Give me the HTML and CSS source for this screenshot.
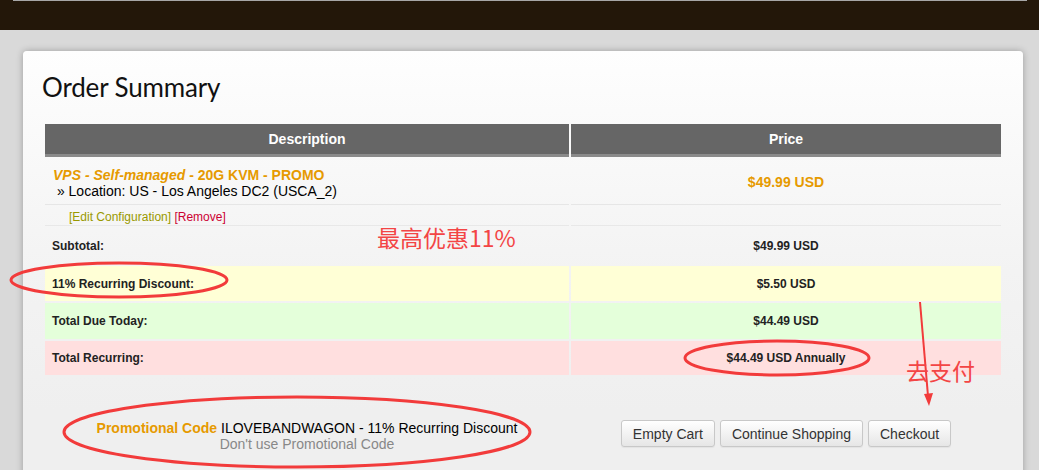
FILE: index.html
```html
<!DOCTYPE html>
<html lang="en">
<head>
  <meta charset="UTF-8">
  <title>Order Summary</title>
  <link rel="stylesheet" href="styles.css">
</head>
<body>
  <div class="topbar">
    <div class="topbar-edge"></div>
  </div>

  <div class="card">
    <h1>Order Summary</h1>

    <table class="cart">
      <tr>
        <th>Description</th>
        <th>Price</th>
      </tr>
      <tr class="item">
        <td class="desc">
          <div class="name"><em>VPS - Self-managed</em> - 20G KVM - PROMO</div>
          <div>&nbsp;» Location: US - Los Angeles DC2 (USCA_2)</div>
        </td>
        <td class="price orange">$49.99 USD</td>
      </tr>
      <tr class="links">
        <td><a class="edit" href="#">[Edit Configuration]</a> <a class="remove" href="#">[Remove]</a></td>
        <td></td>
      </tr>
      <tr class="total">
        <td>Subtotal:</td>
        <td class="price">$49.99 USD</td>
      </tr>
      <tr class="total discount">
        <td>11% Recurring Discount:</td>
        <td class="price">$5.50 USD</td>
      </tr>
      <tr class="total today">
        <td>Total Due Today:</td>
        <td class="price">$44.49 USD</td>
      </tr>
      <tr class="total recurring">
        <td>Total Recurring:</td>
        <td class="price">$44.49 USD Annually</td>
      </tr>
    </table>

    <div class="cart-foot">
      <div class="promo">
        <div><strong class="orange">Promotional Code</strong> ILOVEBANDWAGON - 11% Recurring Discount</div>
        <a class="promo-remove" href="#">Don't use Promotional Code</a>
      </div>
      <div class="actions">
        <button class="btn">Empty Cart</button>
        <button class="btn">Continue Shopping</button>
        <button class="btn">Checkout</button>
      </div>
    </div>
  </div>

  <!-- red marker notes -->
  <div class="notes">
    <svg class="marks" width="1039" height="470" viewBox="0 0 1039 470">
      <ellipse cx="119" cy="280" rx="108" ry="17"/>
      <ellipse cx="777" cy="358" rx="92" ry="17"/>
      <ellipse cx="297" cy="432" rx="233" ry="35"/>
      <line x1="920" y1="302" x2="928" y2="396"/>
      <polygon class="head" points="924,394 933,393 929,406"/>
    </svg>
    <span class="note note-discount">最高优惠11%</span>
    <span class="note note-pay">去支付</span>
  </div>
</body>
</html>
```

FILE: styles.css
```css
* {
  margin: 0;
  padding: 0;
  box-sizing: border-box;
}
body {
  font-family: "Liberation Sans", Arial, sans-serif;
  font-size: 14px;
  color: #000;
  background: #d9d9d9;
  height: 470px;
  overflow: hidden;
}
.topbar {
  height: 30px;
  background: #231709;
}
.topbar-edge {
  margin: 0 12px 0 13px;
  height: 1px;
  background: #a7a7a7;
}
.card {
  margin: 21px 16px 0 23px;
  padding: 0 22px 60px;
  background: linear-gradient(#fefefe, #f3f3f3 220px, #efefef 360px);
  border-radius: 4px;
  box-shadow: 0 0 7px rgba(0, 0, 0, 0.28);
}
h1 {
  font-family: Lato, "Open Sans", sans-serif;
  font-weight: 400;
  font-size: 26px;
  line-height: 30px;
  padding: 21px 0 20px;
  margin-left: -3px;
  letter-spacing: -0.15px;
  color: #111;
}
.cart {
  width: calc(100% + 4px);
  margin: 0 -2px;
  border-collapse: separate;
  border-spacing: 2px;
  table-layout: fixed;
}
.cart th {
  height: 33px;
  background: #666;
  border-bottom: 3px solid #8a8a8a;
  color: #fff;
  font-size: 14px;
  font-weight: bold;
}
.cart th:first-child,
.cart td:first-child {
  width: 524px;
}
.cart td {
  padding: 0 7px;
}
.orange {
  color: #e69a00;
}
.item td {
  height: 46px;
  border-bottom: 1px solid #e6e6e6;
}
.item .desc {
  padding: 2px 8px 0;
  line-height: 16px;
}
.item .name {
  color: #e69a00;
  font-weight: bold;
}
.price {
  text-align: center;
  font-weight: bold;
}
.links td {
  height: 19px;
  font-size: 12px;
  border-bottom: 1px solid #e8e8e8;
}
.links td:first-child {
  padding-left: 24px;
  padding-top: 1px;
}
.links a {
  text-decoration: none;
}
.edit {
  color: #999900;
}
.remove {
  color: #cc0033;
}
.total td {
  height: 36px;
  font-size: 12px;
  font-weight: bold;
  color: #222;
}
.discount td {
  height: 35px;
  background: #ffffd6;
}
.today td {
  background: #e4ffda;
}
.recurring td {
  height: 34px;
  background: #ffdfdf;
}
.cart-foot {
  display: flex;
  padding-top: 43px;
}
.promo {
  width: 524px;
  text-align: center;
  line-height: 16px;
}
.promo-remove {
  color: #888;
  text-decoration: none;
}
.actions {
  flex: 1;
  display: flex;
  justify-content: center;
  gap: 5px;
  padding-left: 2px;
}
.btn {
  height: 27px;
  padding: 0 11px;
  font-family: inherit;
  font-size: 14px;
  color: #333;
  background: linear-gradient(#fff, #e6e6e6);
  border: 1px solid #c8c8c8;
  border-radius: 3px;
  box-shadow: 0 1px 1px rgba(0, 0, 0, 0.05);
}
.notes {
  position: absolute;
  top: 0;
  left: 0;
  width: 1039px;
  height: 470px;
  pointer-events: none;
}
.marks ellipse,
.marks line {
  fill: none;
  stroke: #f23b3b;
  stroke-width: 3;
}
.marks line {
  stroke-width: 2;
}
.marks .head {
  fill: #f23b3b;
}
.note {
  position: absolute;
  font-family: "Noto Sans CJK SC", sans-serif;
  font-weight: 400;
  font-size: 23px;
  line-height: 24px;
  color: #f34545;
}
.note-discount {
  left: 377px;
  top: 225px;
}
.note-pay {
  left: 906px;
  top: 358px;
}
```
